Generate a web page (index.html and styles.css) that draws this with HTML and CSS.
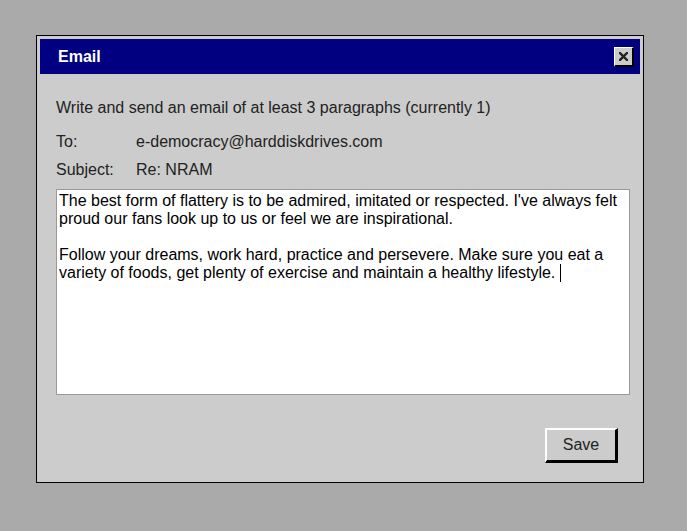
FILE: index.html
```html
<!DOCTYPE html>
<html>
<head>
<meta charset="utf-8">
<link rel="stylesheet" href="styles.css">
</head>
<body>
<div class="dialog">
  <div class="titlebar">
    <span class="title">Email</span>
    <button class="close" aria-label="Close">
      <svg width="9" height="9" viewBox="0 0 9 9"><path d="M1 1 L8 8 M8 1 L1 8" stroke="#222" stroke-width="2.4" stroke-linecap="square"/></svg>
    </button>
  </div>
  <div class="body">
    <p class="intro">Write and send an email of at least 3 paragraphs (currently 1)</p>
    <div class="field"><span class="label">To:</span><span class="value">e-democracy@harddiskdrives.com</span></div>
    <div class="field"><span class="label">Subject:</span><span class="value">Re: NRAM</span></div>
    <div class="editor">The best form of flattery is to be admired, imitated or respected. I've always felt proud our fans look up to us or feel we are inspirational.

Follow your dreams, work hard, practice and persevere. Make sure you eat a variety of foods, get plenty of exercise and maintain a healthy lifestyle. <span class="caret"></span></div>
    <div class="actions"><button class="save">Save</button></div>
  </div>
</div>
</body>
</html>
```
FILE: styles.css
```css
html, body {
  margin: 0;
  padding: 0;
  background: #aaaaaa;
  font-family: "Liberation Sans", Arial, sans-serif;
}
.dialog {
  margin: 35px 0 0 36px;
  width: 600px;
  height: 440px;
  border: 1px solid #000;
  background: #cccccc;
  padding: 3px;
  box-sizing: content-box;
}
.titlebar {
  height: 35px;
  background: #000080;
  display: flex;
  align-items: center;
  justify-content: space-between;
  padding: 0 6px 0 18px;
}
.title {
  color: #fff;
  font-weight: bold;
  font-size: 16px;
}
.close {
  width: 20px;
  height: 20px;
  padding: 0;
  margin: 0;
  background: #cccccc;
  border-style: solid;
  border-width: 1px 2px 2px 1px;
  border-color: #fff #000 #000 #fff;
  display: flex;
  align-items: center;
  justify-content: center;
  margin-top: 1px;
}
.body {
  padding: 0 0 0 16px;
}
.intro {
  margin: 0;
  padding-top: 25px;
  font-size: 16px;
  line-height: 18px;
  color: #222;
}
.field {
  display: flex;
  font-size: 16px;
  line-height: 18px;
  color: #222;
}
.field + .field { margin-top: 10px; }
.intro + .field { margin-top: 16px; }
.label { width: 80px; }
.editor {
  margin-top: 10px;
  width: 567px;
  height: 200px;
  background: #fff;
  border: 1px solid #999;
  padding: 2px 3px 2px 2px;
  font-size: 16px;
  line-height: 18px;
  color: #000;
  white-space: pre-wrap;
  box-sizing: content-box;
}
.caret {
  display: inline-block;
  width: 1px;
  height: 18px;
  background: #000;
  vertical-align: -4px;
}
.actions {
  display: flex;
  justify-content: flex-end;
  padding-right: 22px;
  margin-top: 33px;
}
.save {
  width: 73px;
  height: 35px;
  background: #cccccc;
  border-style: solid;
  border-width: 2px 3px 3px 2px;
  border-color: #fff #000 #000 #fff;
  font-family: "Liberation Sans", Arial, sans-serif;
  font-size: 16px;
  color: #222;
  padding: 0;
}
```
